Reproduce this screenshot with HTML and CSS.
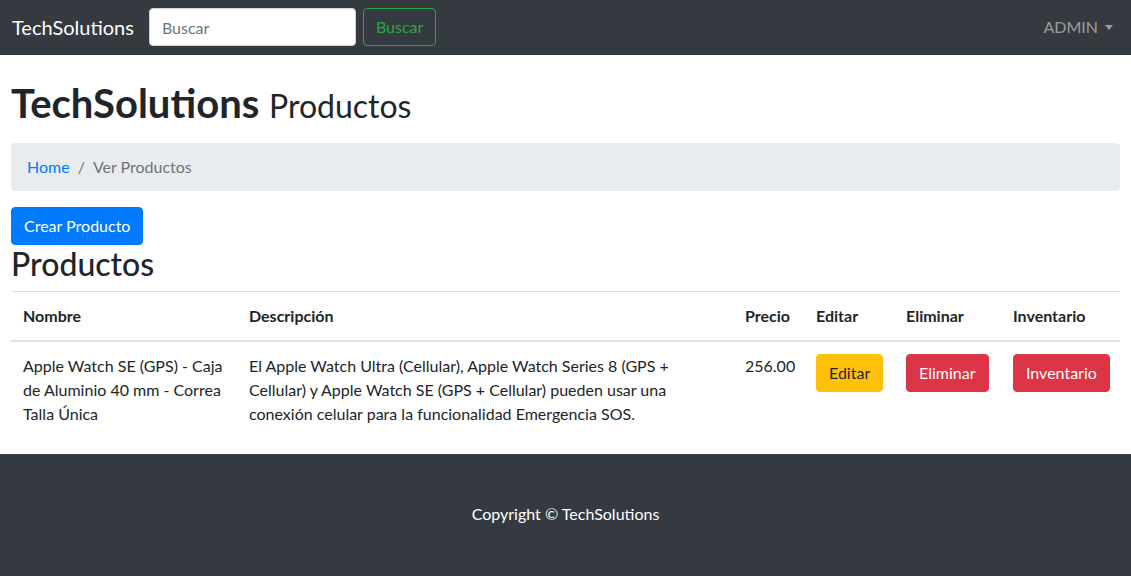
FILE: index.html
```html
<!DOCTYPE html>
<html lang="es">
<head>
<meta charset="utf-8">
<title>TechSolutions - Productos</title>
<link rel="stylesheet" href="styles.css">
</head>
<body>
<nav class="navbar">
  <a class="brand" href="#">TechSolutions</a>
  <form class="search">
    <input class="search-input" type="text" placeholder="Buscar">
    <button class="btn btn-outline-success" type="button">Buscar</button>
  </form>
  <div class="nav-right">
    <a class="nav-link dropdown" href="#">ADMIN<span class="caret"></span></a>
  </div>
</nav>

<main class="container">
  <h1 class="title">TechSolutions <small>Productos</small></h1>
  <ol class="breadcrumb">
    <li class="crumb"><a href="#">Home</a></li>
    <li class="crumb active">Ver Productos</li>
  </ol>
  <a class="btn btn-primary" href="#">Crear Producto</a>
  <h2 class="subtitle">Productos</h2>
  <table class="table">
    <colgroup>
      <col class="c-nombre">
      <col class="c-desc">
      <col class="c-precio">
      <col class="c-editar">
      <col class="c-eliminar">
      <col class="c-inv">
    </colgroup>
    <thead>
      <tr>
        <th>Nombre</th>
        <th>Descripción</th>
        <th>Precio</th>
        <th>Editar</th>
        <th>Eliminar</th>
        <th>Inventario</th>
      </tr>
    </thead>
    <tbody>
      <tr>
        <td>Apple Watch SE (GPS) - Caja de Aluminio 40 mm - Correa Talla Única</td>
        <td>El Apple Watch Ultra (Cellular), Apple Watch Series 8 (GPS + Cellular) y Apple Watch SE (GPS + Cellular) pueden usar una conexión celular para la funcionalidad Emergencia SOS.</td>
        <td>256.00</td>
        <td><a class="btn btn-warning" href="#">Editar</a></td>
        <td><a class="btn btn-danger" href="#">Eliminar</a></td>
        <td><a class="btn btn-danger" href="#">Inventario</a></td>
      </tr>
    </tbody>
  </table>
</main>

<footer class="footer">
  <p>Copyright © TechSolutions</p>
</footer>
</body>
</html>
```
FILE: styles.css
```css
* { box-sizing: border-box; }
html, body { margin: 0; padding: 0; }
body {
  font-family: Lato, "Noto Sans", sans-serif;
  font-size: 16px;
  line-height: 1.5;
  color: #212529;
  background: #fff;
}
a { text-decoration: none; }

/* Navbar */
.navbar {
  display: flex;
  align-items: center;
  height: 55px;
  padding: 8px 16px 9px 12px;
  background: #343a40;
}
.brand {
  color: #fff;
  font-size: 20px;
  line-height: 30px;
  margin-right: 15px;
}
.search { display: flex; align-items: center; gap: 7px; }
.search-input {
  width: 207px;
  height: 38px;
  padding: 6px 12px;
  font: inherit;
  font-size: 16px;
  color: #495057;
  background: #fff;
  border: 1px solid #ced4da;
  border-radius: 4px;
}
.search-input::placeholder { color: #6c757d; }
.nav-right { margin-left: auto; }
.nav-link {
  color: rgba(255,255,255,.5);
  display: flex;
  align-items: center;
  padding: 8px 2px 8px 0;
}
.caret {
  display: inline-block;
  margin-left: 7px;
  width: 0; height: 0;
  border-top: 5px solid rgba(255,255,255,.5);
  border-left: 4.5px solid transparent;
  border-right: 4.5px solid transparent;
}

/* Buttons */
.btn {
  display: inline-block;
  font: inherit;
  font-size: 16px;
  line-height: 24px;
  padding: 6px 12px;
  border: 1px solid transparent;
  border-radius: 4px;
  cursor: pointer;
  background: transparent;
}
.btn-outline-success { color: #28a745; border-color: #28a745; height: 38px; }
.btn-primary { color: #fff; background: #007bff; border-color: #007bff; }
.btn-warning { color: #212529; background: #ffc107; border-color: #ffc107; }
.btn-danger { color: #fff; background: #dc3545; border-color: #dc3545; }

/* Main */
.container {
  padding: 0 11px;
  margin-top: 24px;
}
.title {
  margin: 0 0 13px;
  font-size: 40px;
  font-weight: 700;
  line-height: 48px;
}
.title small {
  font-size: 32px;
  font-weight: 400;
}
.breadcrumb {
  display: flex;
  list-style: none;
  margin: 0 0 16px;
  padding: 12px 16px;
  background: #e9ecef;
  border-radius: 4px;
}
.crumb a { color: #007bff; }
.crumb.active { color: #6c757d; }
.crumb + .crumb { padding-left: 8px; }
.crumb + .crumb::before {
  content: "/";
  color: #6c757d;
  padding-right: 8px;
}
.subtitle {
  margin: 0 0 8px;
  font-size: 32px;
  font-weight: 500;
  line-height: 38px;
}

/* Table */
.table {
  width: 100%;
  table-layout: fixed;
  border-collapse: collapse;
  margin-bottom: 16px;
}
.c-nombre { width: 226px; }
.c-desc { width: 496px; }
.c-precio { width: 71px; }
.c-editar { width: 90px; }
.c-eliminar { width: 107px; }
.c-inv { width: auto; }
.table th, .table td {
  padding: 12px;
  text-align: left;
  vertical-align: top;
  border-top: 1px solid #dee2e6;
}
.table th { font-weight: 700; }
.table thead th { border-bottom: 2px solid #dee2e6; }

/* Footer */
.footer {
  background: #343a40;
  color: #fff;
  text-align: center;
  padding: 48px 0 50px;
}
.footer p { margin: 0; }
```
